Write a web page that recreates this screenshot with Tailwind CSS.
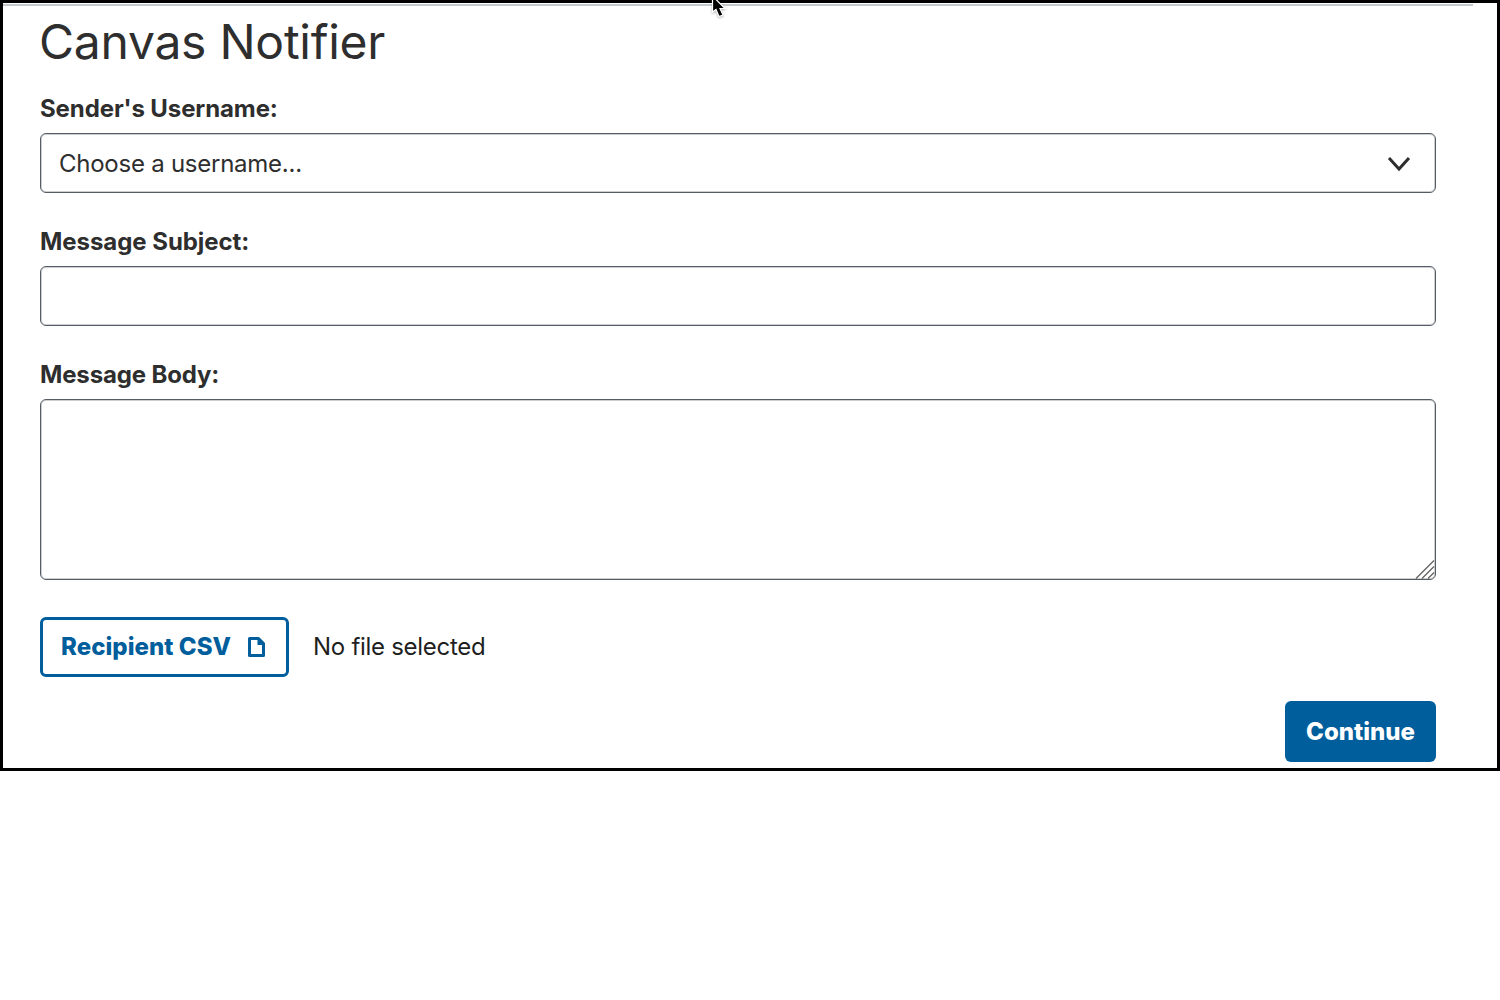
<!doctype html>
<html lang="en">
<head>
    <meta charset="UTF-8">
    <title>Canvas Notifier</title>
    <script src="https://cdn.jsdelivr.net/npm/@tailwindcss/browser@4"></script>
</head>
<body class="bg-white font-['Inter',sans-serif] text-[#2e2e2e]">
<div class="relative h-[771px] border-[3px] border-black">
    <div class="h-[2px] w-[1470px] mt-px bg-[#c3c9cd]"></div>
    <svg class="absolute left-[706px] -top-[3px] drop-shadow-[0_1px_1px_rgba(0,0,0,0.3)]" width="20" height="20" viewBox="0 0 20 20">
        <path d="M3.500 -4 L3.500 12 L7 9.500 L10 16.500 L14 15 L11 8.500 L16 8.500 Z" fill="#000" stroke="#fff" stroke-width="1.200"/>
    </svg>
    <form class="w-[1396px] ml-[37px]">
        <h1 class="text-[48px] leading-[58px] font-normal tracking-[-0.25px] -ml-px mt-[7px]">Canvas Notifier</h1>
        <label class="block mt-[23px] text-[24px] leading-[30px] font-bold tracking-[-0.1px]">Sender's Username:</label>
        <div class="relative mt-[9px]">
            <select class="block w-full h-[60px] appearance-none rounded-[6px] border border-[#565c65] shadow-[inset_0_0_0_1px_rgba(86,92,101,0.3)] pl-[18px] pt-px text-[24px] tracking-[-0.25px] bg-white">
                <option>Choose a username...</option>
            </select>
            <svg class="absolute right-[25px] top-[23px]" width="24" height="16" viewBox="0 0 24 16" fill="none">
                <path d="M2 2 L12 13 L22 2" stroke="#2e2e2e" stroke-width="3"/>
            </svg>
        </div>
        <label class="block mt-[34px] text-[24px] leading-[30px] font-bold tracking-[-0.05px]">Message Subject:</label>
        <input type="text" class="block w-full h-[60px] mt-[9px] rounded-[6px] border border-[#565c65] shadow-[inset_0_0_0_1px_rgba(86,92,101,0.3)] bg-white">
        <label class="block mt-[34px] text-[24px] leading-[30px] font-bold tracking-[-0.15px]">Message Body:</label>
        <div class="relative mt-[9px]">
            <textarea class="block w-full h-[181px] resize-none rounded-[6px] border border-[#565c65] shadow-[inset_0_0_0_1px_rgba(86,92,101,0.3)] bg-white"></textarea>
            <svg class="absolute right-[1px] bottom-[1px]" width="20" height="20" viewBox="0 0 20 20" fill="none" stroke="#5f5f5f" stroke-width="1.300">
                <path d="M1 19.500 L19 1.500"/>
                <path d="M7 19.500 L19 7.500"/>
                <path d="M13 19.500 L19 13.500"/>
            </svg>
        </div>
        <div class="flex items-center gap-[24px] mt-[37px]">
            <button type="button" class="flex items-center gap-[17px] w-[249px] h-[60px] pl-[18px] rounded-[6px] border-[3px] border-[#005e9c] bg-white text-[#005e9c] text-[24px] font-extrabold tracking-[0.05px]">
                Recipient CSV
                <svg width="17" height="20" viewBox="0 0 17 20" fill="none">
                    <path d="M1.500 1.500 H10.500 L15.500 6.500 V18.500 H1.500 Z" stroke="#005e9c" stroke-width="3" stroke-linejoin="round"/>
                    <path d="M9.500 1.500 V8 H16 Z" fill="#005e9c"/>
                </svg>
            </button>
            <span class="text-[24px] tracking-[-0.28px] text-[#1f1f1f]">No file selected</span>
        </div>
        <div class="flex justify-end mt-[24px]">
            <button type="button" class="w-[151px] h-[61px] rounded-[6px] bg-[#005e9c] text-white text-[24px] font-extrabold tracking-[0px]">Continue</button>
        </div>
    </form>
</div>
</body>
</html>
